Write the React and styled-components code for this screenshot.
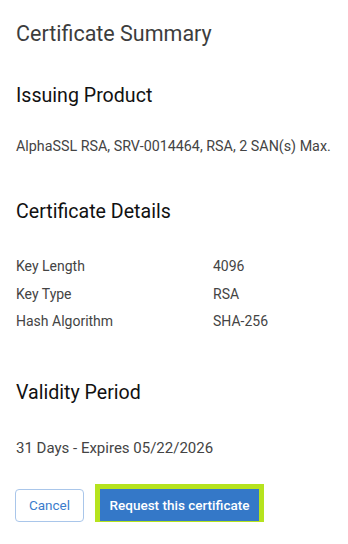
import React from 'react';
import styled, { createGlobalStyle } from 'styled-components';

const GlobalStyle = createGlobalStyle`
    html, body {
        margin: 0;
        padding: 0;
        background: #ffffff;
        font-family: Roboto, "Liberation Sans", Arial, sans-serif;
    }
`;

// Styles
const Page = styled.div`
    display: flex;
    flex-direction: column;
    padding: 21px 16px 0 16px;
`;

const Title = styled.h1`
    margin: 0;
    font-size: 21.5px;
    line-height: 26px;
    font-weight: 400;
    color: #3d3d3d;
`;

const SectionTitle = styled.h2`
    margin: ${props => props.top}px 0 0 0;
    font-size: 19.6px;
    line-height: 24px;
    font-weight: 400;
    color: #111111;
`;

const Text = styled.p`
    margin: ${props => props.top}px 0 0 0;
    font-size: ${props => props.size}px;
    line-height: 18px;
    color: #444444;
`;

const DetailGrid = styled.div`
    display: grid;
    grid-template-columns: 197px 1fr;
    row-gap: 9.5px;
    margin-top: 33.5px;
    font-size: 14px;
    line-height: 18px;
    color: #444444;
`;

const Actions = styled.div`
    display: flex;
    align-items: flex-start;
    gap: 16px;
    margin-top: 31.5px;
    margin-left: -1px;
`;

const CancelButton = styled.button`
    height: 33px;
    width: 69px;
    padding: 0;
    border: 1px solid #a9c6ea;
    border-radius: 4px;
    background: #ffffff;
    font-family: inherit;
    font-size: 13.5px;
    color: #3b7ccc;
`;

const PrimaryButton = styled.button`
    height: 32px;
    width: 159px;
    padding: 0;
    border: none;
    border-radius: 0;
    background: #3478c8;
    font-family: inherit;
    font-size: 13.5px;
    font-weight: 500;
    color: #ffffff;
    outline: 5px solid #b6e31e;
    outline-offset: 0;
`;

const details = [
    ['Key Length', '4096'],
    ['Key Type', 'RSA'],
    ['Hash Algorithm', 'SHA-256'],
];

const App = () => {
    return (
        <Page>
            <GlobalStyle />
            <Title>Certificate Summary</Title>

            <SectionTitle top={36.5}>Issuing Product</SectionTitle>
            <Text top={29.5} size={14.3}>AlphaSSL RSA, SRV-0014464, RSA, 2 SAN(s) Max.</Text>

            <SectionTitle top={44.5}>Certificate Details</SectionTitle>
            <DetailGrid>
                {details.map(([label, value]) => (
                    <React.Fragment key={label}>
                        <span>{label}</span>
                        <span>{value}</span>
                    </React.Fragment>
                ))}
            </DetailGrid>

            <SectionTitle top={50.5}>Validity Period</SectionTitle>
            <Text top={34.5} size={15}>31 Days - Expires 05/22/2026</Text>

            <Actions>
                <CancelButton>Cancel</CancelButton>
                <PrimaryButton>Request this certificate</PrimaryButton>
            </Actions>
        </Page>
    );
};

export default App;
